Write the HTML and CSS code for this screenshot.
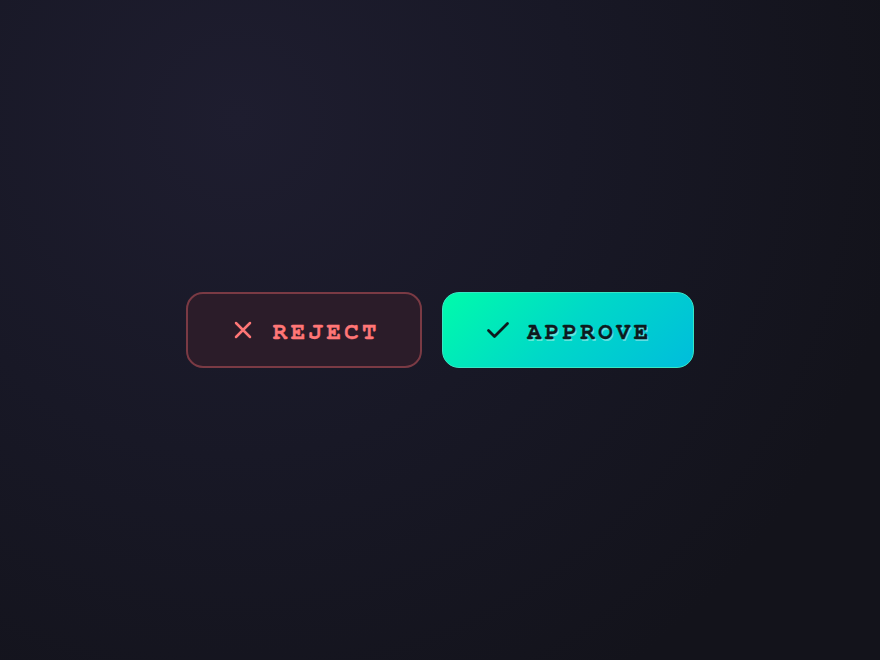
FILE: index.html
```html
<!DOCTYPE html>
<html>
<head>
<meta charset="utf-8">
<link rel="stylesheet" href="styles.css">
</head>
<body>
<main class="stage">
  <div class="actions">
    <button class="btn btn-reject">
      <svg class="icon" viewBox="0 0 20 20" width="20" height="20"><path d="M3 3 L17 17 M17 3 L3 17" fill="none" stroke="currentColor" stroke-width="2.5" stroke-linecap="round"/></svg>
      <span class="label">REJECT</span>
    </button>
    <button class="btn btn-approve">
      <svg class="icon" viewBox="0 0 24 24" width="24" height="24"><path d="M2.5 12.5 L8.5 18.5 L21.5 5.5" fill="none" stroke="currentColor" stroke-width="2.8" stroke-linecap="round" stroke-linejoin="round"/></svg>
      <span class="label">APPROVE</span>
    </button>
  </div>
</main>
</body>
</html>
```

FILE: styles.css
```css
html, body {
  margin: 0;
  height: 100%;
}
body {
  background: radial-gradient(circle at 27% 18%, #1e1d2f 0%, #181826 40%, #13131b 80%);
  background-color: #13131b;
}
.stage {
  height: 100%;
  display: flex;
  align-items: center;
  justify-content: center;
}
.actions {
  display: flex;
  gap: 20px;
}
.btn {
  box-sizing: border-box;
  height: 76px;
  display: inline-flex;
  align-items: center;
  border-radius: 17px;
  font-family: "Nimbus Mono PS", "FreeMono", "Courier", "Nimbus Mono L", "DejaVu Sans Mono", monospace;
  font-weight: 700;
  font-size: 24px;
  letter-spacing: 3.4px;
  line-height: 1;
  cursor: pointer;
}
.label {
  padding-top: 3px;
  -webkit-text-stroke: 0.35px currentColor;
}
.btn-reject {
  width: 236px;
  padding: 0 0 0 45px;
  gap: 20px;
  background: #2b1c29;
  border: 2px solid #7a3a44;
  color: #ff7676;
}
.btn-approve {
  width: 252px;
  padding: 0 0 0 43px;
  gap: 17px;
  background: linear-gradient(135deg, #00fbab 0%, #00d8c8 50%, #00bddc 100%);
  border: 1px solid #38e6c4;
  color: #0d1a1e;
}
.btn-approve .label {
  text-shadow: 1px 2px 0 rgba(255, 255, 255, 0.4);
}
.icon {
  flex: none;
  display: block;
}
```
